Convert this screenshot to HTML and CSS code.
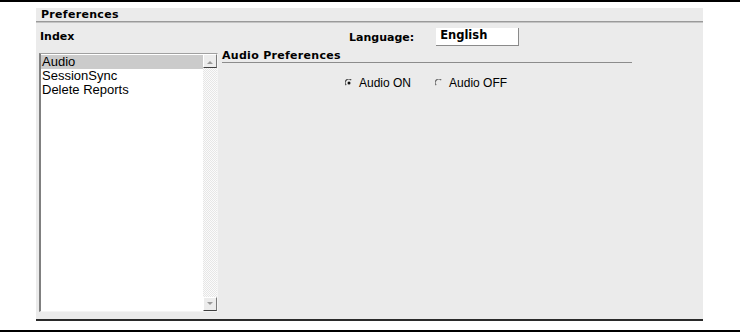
FILE: index.html
```html
<!DOCTYPE html>
<html lang="en">
<head>
    <meta charset="UTF-8">
    <title>Preferences</title>
    <link rel="stylesheet" href="styles.css">
</head>
<body>
    <div class="rule"></div>

    <div class="panel">
        <div class="panel-title">Preferences</div>

        <div class="panel-body">
            <div class="index-col">
                <div class="index-label">Index</div>
                <div class="listbox">
                    <div class="list-items">
                        <div class="list-item selected">Audio</div>
                        <div class="list-item">SessionSync</div>
                        <div class="list-item">Delete Reports</div>
                    </div>
                    <div class="scrollbar">
                        <div class="scroll-btn"><span class="arrow up"></span></div>
                        <div class="scroll-track"></div>
                        <div class="scroll-btn"><span class="arrow down"></span></div>
                    </div>
                </div>
            </div>

            <div class="main-col">
                <div class="lang-row">
                    <span class="lang-label">Language:</span>
                    <div class="lang-box">English</div>
                </div>

                <div class="section">
                    <div class="section-title">Audio Preferences</div>
                    <div class="radio-row">
                        <label class="radio">
                            <svg width="8" height="8" viewBox="0 0 8 8">
                                <path d="M1.2 6.2 A3.3 3.3 0 0 1 6.2 1.2" fill="none" stroke="#4a4a4a" stroke-width="1.2"/>
                                <circle cx="4" cy="4" r="1.5" fill="#111"/>
                            </svg>
                            <span>Audio ON</span>
                        </label>
                        <label class="radio">
                            <svg width="8" height="8" viewBox="0 0 8 8">
                                <path d="M1.2 6.2 A3.3 3.3 0 0 1 6.2 1.2" fill="none" stroke="#6a6a6a" stroke-width="1.2"/>
                            </svg>
                            <span>Audio OFF</span>
                        </label>
                    </div>
                </div>
            </div>
        </div>
    </div>

    <div class="rule bottom"></div>
</body>
</html>
```

FILE: styles.css
```css
* {
    margin: 0;
    padding: 0;
    box-sizing: border-box;
}

body {
    width: 740px;
    height: 332px;
    background: #ffffff;
    color: #000000;
    font-family: "Liberation Sans", Arial, sans-serif;
    overflow: hidden;
}

.rule {
    height: 2px;
    background: #000000;
}

.rule.bottom {
    margin-top: 9px;
}

.panel {
    margin: 6px 37px 0 36px;
    height: 313px;
    background: #ebebeb;
    border-bottom: 2px solid #2a2a2a;
}

.panel-title {
    height: 14px;
    padding-left: 5px;
    font-family: "DejaVu Sans", sans-serif;
    font-weight: bold;
    font-size: 11px;
    line-height: 13px;
    letter-spacing: 0.3px;
    border-bottom: 1px solid #9a9a9a;
    box-shadow: 0 1px 0 #c4c4c4;
}

.panel-body {
    display: flex;
}

/* left column */
.index-col {
    width: 184px;
    padding-left: 3px;
}

.index-label {
    padding-top: 8px;
    padding-left: 1px;
    height: 31px;
    font-family: "DejaVu Sans", sans-serif;
    font-weight: bold;
    font-size: 11px;
    line-height: 13px;
}

.listbox {
    display: flex;
    width: 179px;
    height: 259px;
    background: #ffffff;
    border-top: 1px solid #a0a0a0;
    border-left: 2px solid #808080;
    border-right: 1px solid #f4f4f4;
    border-bottom: 1px solid #f4f4f4;
}

.list-items {
    flex: 1;
    padding-top: 1px;
}

.list-item {
    height: 14px;
    padding-left: 1px;
    font-size: 13px;
    line-height: 14px;
    white-space: nowrap;
}

.list-item.selected {
    background: #cbcbcb;
}

.scrollbar {
    width: 14px;
    display: flex;
    flex-direction: column;
}

.scroll-btn {
    height: 14px;
    background: #ececec;
    border-top: 1px solid #ffffff;
    border-left: 1px solid #ffffff;
    border-right: 1px solid #7a7a7a;
    border-bottom: 1px solid #404040;
    display: flex;
    align-items: center;
    justify-content: center;
}

.scroll-track {
    flex: 1;
    background: repeating-conic-gradient(#e6e6e6 0 25%, #fbfbfb 0 50%) 0 0 / 2px 2px;
}

.arrow {
    width: 0;
    height: 0;
    border-left: 3px solid transparent;
    border-right: 3px solid transparent;
}

.arrow.up {
    border-bottom: 3px solid #9a9a9a;
    margin-top: 2px;
}

.arrow.down {
    border-top: 3px solid #9a9a9a;
    margin-bottom: 2px;
}

/* right column */
.main-col {
    flex: 1;
}

.lang-row {
    display: flex;
    align-items: center;
    gap: 22px;
    padding-top: 6px;
    padding-left: 129px;
}

.lang-label {
    font-family: "DejaVu Sans", sans-serif;
    font-weight: bold;
    font-size: 11px;
    line-height: 13px;
}

.lang-box {
    width: 83px;
    height: 18px;
    padding-left: 4px;
    background: #ffffff;
    border-right: 1px solid #8a8a8a;
    border-bottom: 1px solid #8a8a8a;
    font-family: "DejaVu Sans", sans-serif;
    font-weight: bold;
    font-size: 11.5px;
    line-height: 14px;
}

.section {
    margin-top: 4px;
    margin-left: 2px;
}

.section-title {
    width: 410px;
    height: 13px;
    font-family: "DejaVu Sans", sans-serif;
    font-weight: bold;
    font-size: 11px;
    line-height: 12px;
    letter-spacing: 0.3px;
    border-bottom: 1px solid #8c8c8c;
}

.radio-row {
    display: flex;
    gap: 24px;
    margin-top: 13px;
    padding-left: 123px;
}

.radio {
    display: flex;
    align-items: center;
    gap: 6px;
    font-size: 12px;
    line-height: 14px;
}
```
